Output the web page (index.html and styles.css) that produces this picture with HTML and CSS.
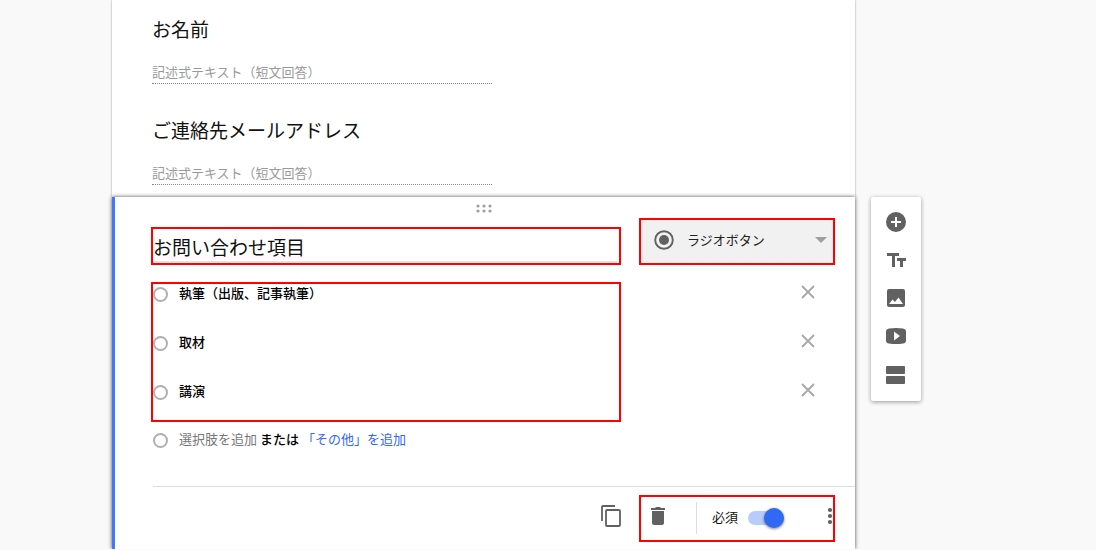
FILE: index.html
```html
<!DOCTYPE html>
<html lang="ja">
  <head>
    <meta charset="utf-8">
    <title>フォーム</title>
    <link rel="stylesheet" href="styles.css">
  </head>

  <body>
    <div class="page">

      <section class="questions">
        <div class="question">
          <h2 class="title">お名前</h2>
          <p class="hint">記述式テキスト（短文回答）</p>
        </div>
        <div class="question">
          <h2 class="title">ご連絡先メールアドレス</h2>
          <p class="hint">記述式テキスト（短文回答）</p>
        </div>
      </section>

      <!-- Question being edited -->
      <section class="editor">
        <div class="handle">
          <svg width="16" height="9" viewBox="0 0 16 9" fill="#9e9e9e">
            <circle cx="2" cy="2" r="1.6"/><circle cx="8" cy="2" r="1.6"/><circle cx="14" cy="2" r="1.6"/>
            <circle cx="2" cy="7" r="1.6"/><circle cx="8" cy="7" r="1.6"/><circle cx="14" cy="7" r="1.6"/>
          </svg>
        </div>

        <div class="columns head">
          <div class="mark name">
            <input type="text" class="title name-input" aria-label="質問" value="お問い合わせ項目">
          </div>
          <div class="mark type">
            <svg width="20" height="20" viewBox="0 0 20 20">
              <circle cx="10" cy="10" r="8.8" fill="none" stroke="#616161" stroke-width="1.9"/>
              <circle cx="10" cy="10" r="5" fill="#616161"/>
            </svg>
            <select class="type-select" aria-label="質問の形式">
              <option selected>ラジオボタン</option>
              <option>チェックボックス</option>
              <option>プルダウン</option>
            </select>
            <svg width="12" height="6" viewBox="0 0 12 6"><path d="M0 0h12L6 6z" fill="#9e9e9e"/></svg>
          </div>
        </div>

        <div class="columns choices">
          <div class="mark options">
            <div class="option">
              <input type="radio" class="radio" name="item" id="item1">
              <label for="item1" class="option-label">執筆（出版、記事執筆）</label>
            </div>
            <div class="option">
              <input type="radio" class="radio" name="item" id="item2">
              <label for="item2" class="option-label">取材</label>
            </div>
            <div class="option">
              <input type="radio" class="radio" name="item" id="item3">
              <label for="item3" class="option-label">講演</label>
            </div>
          </div>
          <div class="removes">
            <button type="button" class="btn remove" aria-label="執筆を削除">
              <svg width="14" height="14" viewBox="0 0 14 14"><path d="M1 1l12 12M13 1L1 13" stroke="#a6a6a6" stroke-width="1.8"/></svg>
            </button>
            <button type="button" class="btn remove" aria-label="取材を削除">
              <svg width="14" height="14" viewBox="0 0 14 14"><path d="M1 1l12 12M13 1L1 13" stroke="#a6a6a6" stroke-width="1.8"/></svg>
            </button>
            <button type="button" class="btn remove" aria-label="講演を削除">
              <svg width="14" height="14" viewBox="0 0 14 14"><path d="M1 1l12 12M13 1L1 13" stroke="#a6a6a6" stroke-width="1.8"/></svg>
            </button>
          </div>
        </div>

        <div class="option add">
          <input type="radio" class="radio" name="item" id="item4">
          <div class="add-text">
            <label for="item4" class="add-label">選択肢を追加</label>
            <span class="or">または</span>
            <a href="#" class="other">「その他」を追加</a>
          </div>
        </div>

        <div class="footer">
          <button type="button" class="btn tool" aria-label="コピーを作成">
            <svg width="20" height="22" viewBox="0 0 20 22" fill="none" stroke="#616161" stroke-width="1.8">
              <path d="M1 16V2q0-1 1-1h12"/>
              <rect x="5" y="5" width="14" height="16" rx="1"/>
            </svg>
          </button>
          <div class="mark tools">
            <button type="button" class="btn tool" aria-label="削除">
              <svg width="14" height="18" viewBox="0 0 14 18" fill="#616161">
                <path d="M1 4h12v12a2 2 0 0 1-2 2H3a2 2 0 0 1-2-2zM0 1h4l1-1h4l1 1h4v2H0z"/>
              </svg>
            </button>
            <span class="line"></span>
            <label for="required" class="required">必須</label>
            <input type="checkbox" class="toggle" id="required" checked>
            <button type="button" class="btn tool more" aria-label="その他のオプション">
              <svg width="6" height="18" viewBox="0 0 6 18" fill="#616161">
                <circle cx="3" cy="3" r="2.1"/><circle cx="3" cy="9" r="2.1"/><circle cx="3" cy="15" r="2.1"/>
              </svg>
            </button>
          </div>
        </div>
      </section>

      <nav class="sidebar">
        <button type="button" class="btn side" aria-label="質問を追加">
          <svg width="24" height="24" viewBox="0 0 24 24" fill="#616161">
            <path d="M12 2a10 10 0 1 0 0 20 10 10 0 0 0 0-20zm5 11h-4v4h-2v-4H7v-2h4V7h2v4h4z"/>
          </svg>
        </button>
        <button type="button" class="btn side" aria-label="タイトルと説明を追加">
          <svg width="24" height="24" viewBox="0 0 24 24" fill="#616161">
            <path d="M3 5h12v3h-4v11H8V8H3zM13 10h9v3h-3v6h-3v-6h-3z"/>
          </svg>
        </button>
        <button type="button" class="btn side" aria-label="画像を追加">
          <svg width="24" height="24" viewBox="0 0 24 24" fill="#616161">
            <path d="M21 19V5a2 2 0 0 0-2-2H5a2 2 0 0 0-2 2v14a2 2 0 0 0 2 2h14a2 2 0 0 0 2-2zM5 18l3.500-4.500 2.500 2.500 3.500-4.500L19 18z"/>
          </svg>
        </button>
        <button type="button" class="btn side" aria-label="動画を追加">
          <svg width="24" height="24" viewBox="0 0 24 24" fill="#616161">
            <path d="M5 4.500Q12 3.500 19 4.500q3 .5 3 3v9q0 2.500-3 3-7 1-14 0-3-.5-3-3v-9q0-2.500 3-3zM10 7.500v9l6-4.500z"/>
          </svg>
        </button>
        <button type="button" class="btn side" aria-label="セクションを追加">
          <svg width="24" height="24" viewBox="0 0 24 24" fill="#616161">
            <rect x="2" y="4" width="19" height="8" rx="1"/><rect x="2" y="14" width="19" height="8" rx="1"/>
          </svg>
        </button>
      </nav>

    </div>
  </body>
</html>
```
FILE: styles.css
```css
* {
  box-sizing: border-box;
}
body {
  margin: 0;
  background-color: #f9f9f9;
  color: #111;
  font-family: "Noto Sans CJK JP", sans-serif;
  font-size: 13px;
  line-height: 20px;
}
.page {
  display: grid;
  grid-template-columns: 1fr 50px;
  column-gap: 16px;
  padding: 0 175px 0 112px;
}

.questions {
  display: flex;
  flex-direction: column;
  gap: 32px;
  padding: 15px 23px 12px 40px;
  background-color: #fff;
  box-shadow: 0 0 2px rgba(0, 0, 0, 0.4);
}
.title {
  margin: 0;
  color: #111;
  font-family: inherit;
  font-size: 19px;
  font-weight: normal;
  line-height: 28px;
}
.hint {
  width: 50%;
  margin: 20px 0 0;
  border-bottom: 1px dotted #888;
  padding-bottom: 2px;
  color: #999;
  line-height: 18px;
}

.editor {
  position: relative;
  grid-column: 1;
  border-left: 3px solid #4178fa;
  padding-left: 36px;
  background-color: #fff;
  box-shadow: 0 0 4px rgba(0, 0, 0, 0.7);
}
.handle {
  display: flex;
  justify-content: center;
  align-items: center;
  height: 21px;
  margin-left: -38px;
  padding-top: 2px;
}
.columns {
  display: grid;
  grid-template-columns: 1fr 196px;
  column-gap: 18px;
  padding-right: 20px;
}
.head {
  align-items: end;
}
/* red frames */
.mark {
  border: 2px solid #f00;
}
.name {
  height: 38px;
  padding-right: 2px;
}
.name-input {
  display: block;
  width: 100%;
  height: 34px;
  border: 0;
  border-bottom: 2px solid #e3e3e8;
  padding: 2px 0 0;
  background: none;
}
.type {
  display: flex;
  align-items: center;
  height: 47px;
  padding: 0 6px 4px 13px;
  background-color: #f1f1f1;
}
.type-select {
  flex: 1;
  min-width: 0;
  appearance: none;
  border: 0;
  padding: 0 0 0 13px;
  background: none;
  color: #222;
  font: inherit;
}

.choices {
  margin-top: 17px;
}
.options {
  display: flex;
  flex-direction: column;
  gap: 29px;
  padding-bottom: 18px;
}
.option {
  display: flex;
  align-items: center;
  gap: 11px;
  height: 20px;
}
.option-label,
.add-text {
  padding-bottom: 2px;
}
.option-label,
.or {
  color: #000;
  font-weight: 500;
}
.radio {
  appearance: none;
  width: 15px;
  height: 15px;
  margin: 0;
  border: 2px solid #b0b0b0;
  border-radius: 50%;
}
.removes {
  display: flex;
  flex-direction: column;
  align-items: flex-end;
  gap: 29px;
  padding-right: 20px;
}
.btn {
  display: flex;
  justify-content: center;
  align-items: center;
  border: 0;
  padding: 0;
  background: none;
}
.remove {
  height: 20px;
}
.add {
  margin-top: 8px;
  padding-left: 2px;
}
.add-label {
  color: #777;
}
.other {
  color: #3367f6;
  text-decoration: none;
}

.footer {
  display: flex;
  justify-content: flex-end;
  align-items: center;
  gap: 18px;
  height: 63px;
  margin: 36px 0 0 2px;
  border-top: 1px solid #ddd;
  padding-right: 20px;
}
.tools {
  display: flex;
  align-items: center;
  width: 196px;
  height: 47px;
  padding-left: 10px;
}
.tool {
  padding-bottom: 4px;
}
.line {
  width: 1px;
  height: 32px;
  margin: 0 15px 0 31px;
  background-color: #ddd;
}
.required {
  margin-right: 10px;
  padding-bottom: 2px;
}
.toggle {
  display: flex;
  align-items: center;
  justify-content: flex-end;
  appearance: none;
  width: 36px;
  height: 14px;
  margin: 0;
  border-radius: 7px;
  background-color: #b8ccfc;
}
.toggle::before {
  content: "";
  width: 20px;
  height: 20px;
  border-radius: 50%;
  background-color: #3069f3;
  box-shadow: 0 1px 3px rgba(0, 0, 0, 0.5);
}
.more {
  margin-left: auto;
}

.sidebar {
  grid-column: 2;
  align-self: start;
  border-radius: 2px;
  padding: 6px 0 8px;
  background-color: #fff;
  box-shadow: 0 1px 4px rgba(0, 0, 0, 0.4);
}
.side {
  width: 100%;
  height: 38px;
}
```
